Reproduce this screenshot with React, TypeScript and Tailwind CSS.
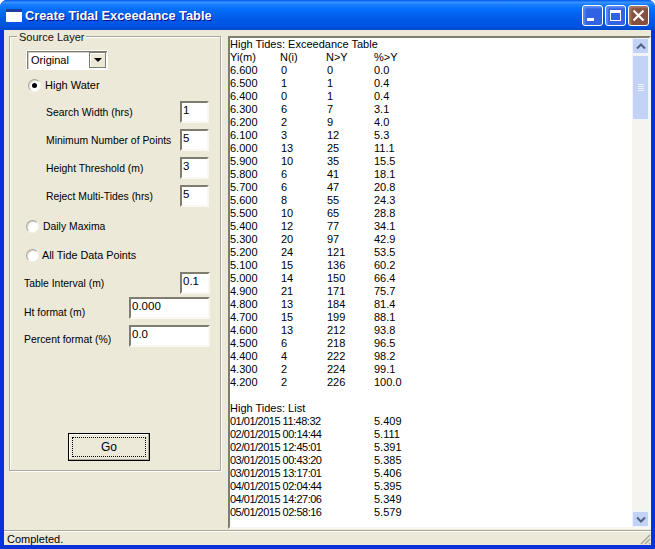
const exceedance = [
  ["6.600", "0", "0", "0.0"],
  ["6.500", "1", "1", "0.4"],
  ["6.400", "0", "1", "0.4"],
  ["6.300", "6", "7", "3.1"],
  ["6.200", "2", "9", "4.0"],
  ["6.100", "3", "12", "5.3"],
  ["6.000", "13", "25", "11.1"],
  ["5.900", "10", "35", "15.5"],
  ["5.800", "6", "41", "18.1"],
  ["5.700", "6", "47", "20.8"],
  ["5.600", "8", "55", "24.3"],
  ["5.500", "10", "65", "28.8"],
  ["5.400", "12", "77", "34.1"],
  ["5.300", "20", "97", "42.9"],
  ["5.200", "24", "121", "53.5"],
  ["5.100", "15", "136", "60.2"],
  ["5.000", "14", "150", "66.4"],
  ["4.900", "21", "171", "75.7"],
  ["4.800", "13", "184", "81.4"],
  ["4.700", "15", "199", "88.1"],
  ["4.600", "13", "212", "93.8"],
  ["4.500", "6", "218", "96.5"],
  ["4.400", "4", "222", "98.2"],
  ["4.300", "2", "224", "99.1"],
  ["4.200", "2", "226", "100.0"],
];

const tideList = [
  ["01/01/2015 11:48:32", "5.409"],
  ["02/01/2015 00:14:44", "5.111"],
  ["02/01/2015 12:45:01", "5.391"],
  ["03/01/2015 00:43:20", "5.385"],
  ["03/01/2015 13:17:01", "5.406"],
  ["04/01/2015 02:04:44", "5.395"],
  ["04/01/2015 14:27:06", "5.349"],
  ["05/01/2015 02:58:16", "5.579"],
];

function Field({ value, className }: { value: string; className: string }) {
  return (
    <div className={`h-[22px] shrink-0 bg-white border-2 border-t-[#7f7d70] border-l-[#7f7d70] border-r-[#f8f7f2] border-b-[#f8f7f2] pl-px text-[11.5px] leading-[14px] ${className}`}>
      {value}
    </div>
  );
}

function ParamRow({ label, value }: { label: string; value: string }) {
  return (
    <div className="h-[22px] mb-[6px] flex items-center justify-between pl-[36px] pr-[11px]">
      <span className="whitespace-nowrap text-[10.4px]">{label}</span>
      <Field value={value} className="w-[29px]" />
    </div>
  );
}

function Radio({ checked }: { checked?: boolean }) {
  return (
    <span className="w-[13px] h-[13px] shrink-0 rounded-full bg-white border border-t-[#a7a69c] border-l-[#a7a69c] border-r-[#f4f3ec] border-b-[#f4f3ec] flex items-center justify-center shadow-[inset_1px_1px_0_#d8d6c8]">
      {checked && <span className="w-[5px] h-[5px] rounded-full bg-black" />}
    </span>
  );
}

function ScrollBtn({ down }: { down?: boolean }) {
  return (
    <div className="h-[16px] shrink-0 rounded-[2px] bg-[#c3d3f8] border border-[#eef3fe] flex items-center justify-center">
      <svg width="10" height="7" viewBox="0 0 10 7">
        <path d={down ? "M1 1.5 L5 5.5 L9 1.5" : "M1 5.5 L5 1.5 L9 5.5"} fill="none" stroke="#4d6185" strokeWidth="2" />
      </svg>
    </div>
  );
}

export default function App() {
  return (
    <div className="w-[655px] h-[549px] flex flex-col overflow-hidden rounded-t-[7px] bg-[#0831d9] text-[11px] leading-[13px] text-black font-['Liberation_Sans',sans-serif]">
      {/* title bar */}
      <div className="h-[30px] shrink-0 flex items-center pl-[6px] pr-[6px] bg-[linear-gradient(180deg,#0058ee_0%,#3a93ff_8%,#1a80ff_14%,#036ffc_30%,#0262ee_50%,#0057e5_70%,#0054e3_85%,#0048c8_100%)]">
        <div className="w-[16px] h-[13px] bg-white border-t-[3px] border-[#1a3f9c] rounded-[1px]" />
        <span className="ml-[3px] text-white font-bold text-[12.8px] [text-shadow:1px_1px_0_#0f1089]">
          Create Tidal Exceedance Table
        </span>
        <div className="ml-auto flex gap-[2px]">
          <div className="w-[21px] h-[21px] rounded-[3px] border border-white bg-[#2f63e3] flex items-end pl-[4px] pb-[4px] shadow-[inset_2px_2px_2px_#5d8cf0]">
            <div className="w-[7px] h-[3px] bg-white" />
          </div>
          <div className="w-[21px] h-[21px] rounded-[3px] border border-white bg-[#2f63e3] flex items-center justify-center shadow-[inset_2px_2px_2px_#5d8cf0]">
            <div className="w-[11px] h-[11px] border border-white border-t-[3px]" />
          </div>
          <div className="w-[21px] h-[21px] rounded-[3px] border border-white bg-[#86503c] flex items-center justify-center shadow-[inset_2px_2px_2px_#a87a66]">
            <svg width="13" height="13" viewBox="0 0 13 13">
              <path d="M1.5 1.5 L11.5 11.5 M11.5 1.5 L1.5 11.5" stroke="#fff" strokeWidth="2.2" />
            </svg>
          </div>
        </div>
      </div>

      {/* client */}
      <div className="flex-1 min-h-0 mx-[4px] mb-[4px] bg-[#ece9d8] flex flex-col">
        <div className="flex-1 min-h-0 flex pt-[6px]">
          <div className="w-[224px] shrink-0 pl-[5px] pr-[7px]">
            {/* group box */}
            <div className="relative h-[435px] border border-[#aca899] shadow-[1px_1px_0_#fff,inset_1px_1px_0_#fff] pt-[13px] text-[10.4px]">
              <span className="absolute left-[7px] top-[-6px] px-[2px] bg-[#ece9d8] text-[#111] text-[11px]">Source Layer</span>
              <div className="ml-[16px] w-[82px] h-[20px] bg-white border border-[#fff] shadow-[inset_1px_1px_0_#7f7d70,inset_2px_2px_0_#d4d0c8] flex items-center pl-[4px] justify-between pr-[1px] text-[11px]">
                <span>Original</span>
                <span className="w-[17px] h-[16px] bg-[#ece9d8] border border-[#7f7d70] shadow-[inset_1px_1px_0_#fff] flex items-center justify-center">
                  <span className="w-0 h-0 border-x-[4px] border-x-transparent border-t-[4px] border-t-black" />
                </span>
              </div>

              <label className="mt-[8px] ml-[18px] h-[14px] flex items-center gap-[4px] text-[11px]">
                <Radio checked />
                <span>High Water</span>
              </label>

              <div className="mt-[9px]">
                <ParamRow label="Search Width (hrs)" value="1" />
                <ParamRow label="Minimum Number of Points" value="5" />
                <ParamRow label="Height Threshold (m)" value="3" />
                <ParamRow label="Reject Multi-Tides (hrs)" value="5" />
              </div>

              <label className="mt-[12px] ml-[16px] h-[14px] flex items-center gap-[4px]">
                <Radio />
                <span>Daily Maxima</span>
              </label>
              <label className="mt-[15px] ml-[16px] h-[14px] flex items-center gap-[3px] text-[10.8px]">
                <Radio />
                <span>All Tide Data Points</span>
              </label>

              <div className="mt-[10px] pl-[14px] pr-[10px] h-[22px] flex items-center justify-between">
                <span>Table Interval (m)</span>
                <Field value="0.1" className="w-[30px]" />
              </div>
              <div className="mt-[3px] pl-[14px] pr-[10px] h-[22px] flex items-center justify-between">
                <span className="pt-[8px]">Ht format (m)</span>
                <Field value="0.000" className="w-[81px]" />
              </div>
              <div className="mt-[6px] pl-[14px] pr-[10px] h-[22px] flex items-center justify-between">
                <span className="pt-[6px]">Percent format (%)</span>
                <Field value="0.0" className="w-[81px]" />
              </div>

              <div className="mt-[86px] ml-[58px] w-[82px] h-[28px] border border-black bg-[#ece9d8] shadow-[inset_-1px_-1px_0_#aca899,inset_1px_1px_0_#fff] p-[3px]">
                <div className="h-full border border-dotted border-black flex items-center justify-center text-[12px]">Go</div>
              </div>
            </div>
          </div>

          {/* output text box */}
          <div className="flex-1 min-w-0 h-[493px] flex bg-white border-2 border-t-[#7f7d70] border-l-[#7f7d70] border-r-[#f8f7f2] border-b-[#f8f7f2]">
            <div className="flex-1 min-w-0 overflow-hidden">
              <div className="h-[13px]">High Tides: Exceedance Table</div>
              <div className="h-[13px] grid grid-cols-[50px_46px_48px_1fr]">
                <span>Yi(m)</span>
                <span>N(i)</span>
                <span>N&gt;Y</span>
                <span>%&gt;Y</span>
              </div>
              {exceedance.map((row) => (
                <div key={row[0]} className="h-[13px] grid grid-cols-[50px_46px_48px_1fr]">
                  <span>{row[0]}</span>
                  <span className="pl-px">{row[1]}</span>
                  <span className="pl-px">{row[2]}</span>
                  <span>{row[3]}</span>
                </div>
              ))}
              <div className="h-[13px]" />
              <div className="h-[13px]">High Tides: List</div>
              {tideList.map((row) => (
                <div key={row[0]} className="h-[13px] grid grid-cols-[144px_1fr]">
                  <span className="tracking-[-0.5px]">{row[0]}</span>
                  <span>{row[1]}</span>
                </div>
              ))}
            </div>
            {/* scrollbar */}
            <div className="w-[17px] shrink-0 flex flex-col bg-[#f5f4ee]">
              <ScrollBtn />
              <div className="mt-px h-[65px] rounded-[2px] bg-[#c3d3f8] border border-[#eef3fe] flex flex-col items-center justify-center gap-px">
                <div className="w-[6px] h-px bg-[#eef3fe]" />
                <div className="w-[6px] h-px bg-[#eef3fe]" />
                <div className="w-[6px] h-px bg-[#eef3fe]" />
                <div className="w-[6px] h-px bg-[#eef3fe]" />
              </div>
              <div className="flex-1" />
              <ScrollBtn down />
            </div>
          </div>
        </div>

        {/* status bar */}
        <div className="h-[15px] shrink-0 mt-[2px] border-t border-[#aca899] shadow-[inset_0_1px_0_#fff] pl-[3px] pt-[2px] flex items-center justify-between">
          <span>Completed.</span>
          <svg width="12" height="12" viewBox="0 0 12 12" className="self-end">
            <path d="M11 2 L2 11 M11 6 L6 11 M11 10 L10 11" stroke="#aca899" strokeWidth="1.5" />
          </svg>
        </div>
      </div>
    </div>
  );
}
